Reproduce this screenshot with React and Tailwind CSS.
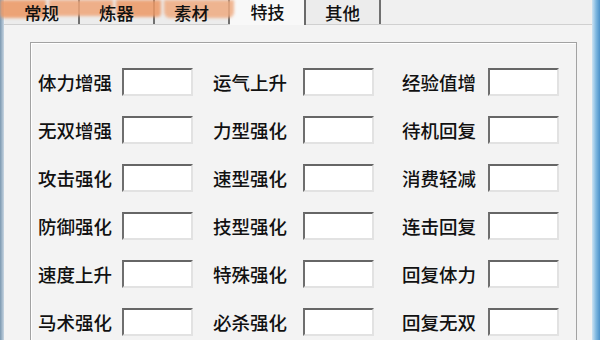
import React from "react";

const rows = [
  ["体力增强", "运气上升", "经验值增"],
  ["无双增强", "力型强化", "待机回复"],
  ["攻击强化", "速型强化", "消费轻减"],
  ["防御强化", "技型强化", "连击回复"],
  ["速度上升", "特殊强化", "回复体力"],
  ["马术强化", "必杀强化", "回复无双"],
];

const tabs = ["常规", "炼器", "素材", "特技", "其他"];

const Field = () => (
  <div className="w-[71px] h-[28px] bg-white border-2 border-t-[#666666] border-l-[#6e6e6e] border-r-[#e2e2e2] border-b-[#e2e2e2]" />
);

export default function App() {
  return (
    <div
      className="w-[600px] h-[340px] overflow-hidden flex bg-[#f0f0f0] text-[#111]"
      style={{ fontFamily: '"Noto Sans CJK SC", "Noto Sans", sans-serif' }}
    >
      {/* left window frame */}
      <div className="w-[4px] bg-gradient-to-r from-[#7c98b0] to-[#c8d6e2]" />

      <div className="flex-1 flex flex-col relative">
        {/* watermark smear over the first tabs */}
        <div className="absolute left-[-4px] top-0 w-[234px] h-[19px] flex items-start gap-[3px] blur-[1.5px] pointer-events-none z-[1]">
          <div className="w-[46px] h-[18px] bg-[#ec9662]/85 rounded-b-sm" />
          <div className="w-[64px] h-[16px] bg-[#efa578]/85 rounded-b-md" />
          <div className="w-[46px] h-[17px] bg-[#ec9864]/85 rounded-b-sm" />
          <div className="w-[70px] h-[18px] bg-[#efaa80]/85 rounded-b-md" />
        </div>

        {/* tab strip */}
        <div className="h-[25px] flex pl-[1px] border-b border-[#d0d0d0]">
          {tabs.map((t, i) =>
            i === 3 ? (
              <div
                key={t}
                className="w-[76px] h-[25px] bg-[#f8f8f8] flex justify-center items-start pt-[2px] text-[17px] leading-[19px] font-medium border-r-2 border-[#6a6a6a]"
              >
                <span className="relative z-[2] pl-[1px]">{t}</span>
              </div>
            ) : (
              <div
                key={t}
                className="w-[75px] h-[24px] bg-[#ececec] flex justify-center items-start pt-[3px] text-[17.5px] leading-[19px] font-medium border-r-2 border-[#707070]"
              >
                <span className="relative z-[2]">{t}</span>
              </div>
            )
          )}
        </div>

        {/* tab page */}
        <div className="flex-1 pl-[26px] pr-[15px] pt-[17px] bg-[#f3f3f3]">
          <div className="h-[320px] border border-[#a2a2a2] shadow-[inset_1px_1px_0_#ffffff] pt-[25px]">
            <div className="flex flex-col gap-[20px]">
              {rows.map((r) => (
                <div key={r[0]} className="flex items-center h-[28px] text-[18.5px] leading-[20px] font-medium">
                  <div className="w-[182px] flex items-center pl-[7px]">
                    <span className="w-[84px]">{r[0]}</span>
                    <Field />
                  </div>
                  <div className="w-[189px] flex items-center">
                    <span className="w-[90px]">{r[1]}</span>
                    <Field />
                  </div>
                  <div className="flex items-center">
                    <span className="w-[86px]">{r[2]}</span>
                    <Field />
                  </div>
                </div>
              ))}
            </div>
          </div>
        </div>
      </div>

      {/* right window frame */}
      <div className="w-[8px] bg-gradient-to-r from-[#cfe4f2] via-[#7fb8e0] to-[#4a90c8]" />
    </div>
  );
}
